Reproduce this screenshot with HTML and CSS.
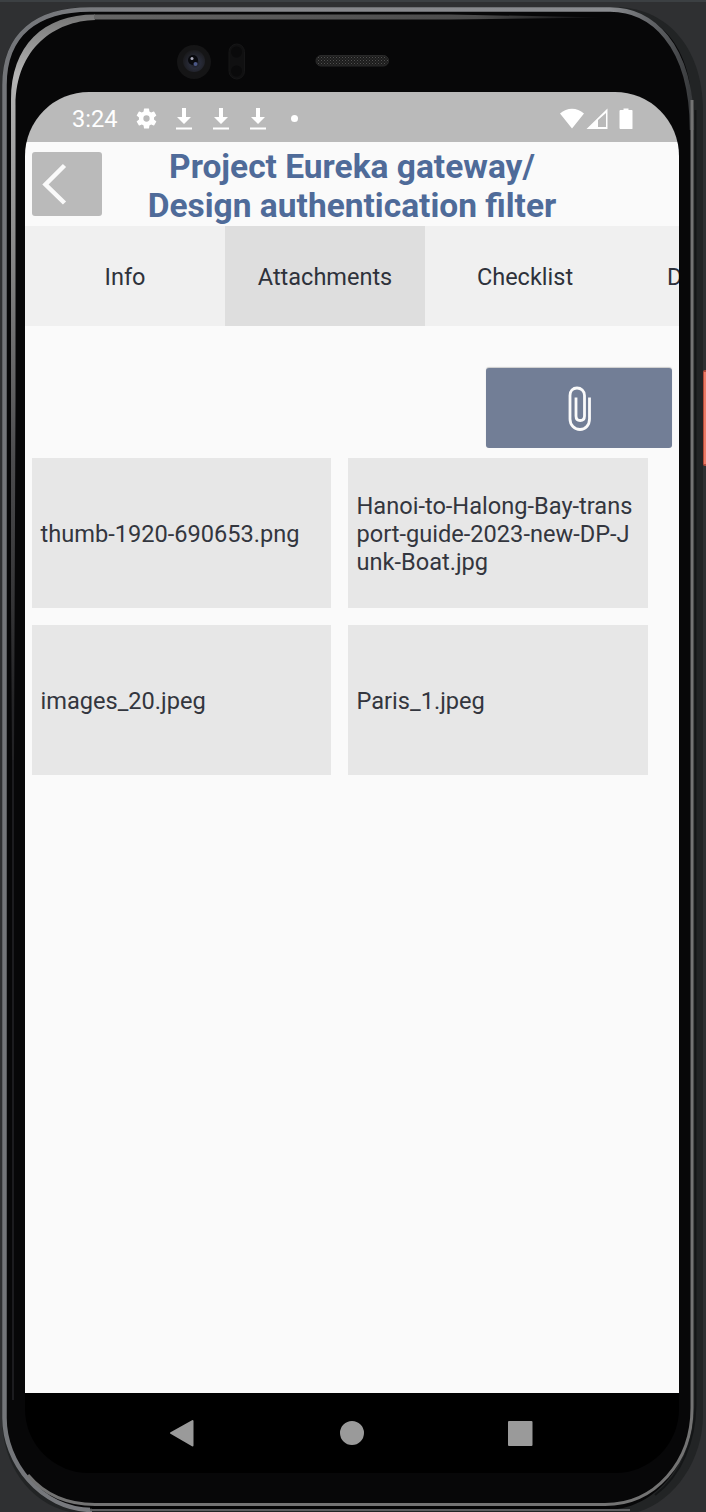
FILE: index.html
```
<!DOCTYPE html>
<html lang="en">
<head>
<meta charset="utf-8">
<title>Project Eureka gateway</title>
<link rel="stylesheet" href="styles.css">
</head>
<body>
<div class="device">
  <svg class="frame" viewBox="0 0 706 1512" aria-hidden="true">
    <defs>
      <linearGradient id="rim" gradientUnits="userSpaceOnUse" x1="0" y1="0" x2="700" y2="0">
        <stop offset="0" stop-color="#737579"/><stop offset=".4" stop-color="#85868a"/><stop offset=".87" stop-color="#898b8f"/><stop offset=".95" stop-color="#55575a"/><stop offset="1" stop-color="#2e3032"/>
      </linearGradient>
      <linearGradient id="silver" gradientUnits="userSpaceOnUse" x1="0" y1="16" x2="0" y2="760">
        <stop offset="0" stop-color="#777"/><stop offset=".08" stop-color="#b5b5b5"/><stop offset=".3" stop-color="#8c8c8c"/><stop offset=".6" stop-color="#4b4b4d"/><stop offset="1" stop-color="#1b1b1d"/>
      </linearGradient>
      <linearGradient id="topline" gradientUnits="userSpaceOnUse" x1="90" y1="0" x2="605" y2="0">
        <stop offset="0" stop-color="#666"/><stop offset=".75" stop-color="#4b4b4b"/><stop offset="1" stop-color="#08080a"/>
      </linearGradient>
      <radialGradient id="lens" cx=".55" cy=".6" r=".6">
        <stop offset="0" stop-color="#15161c"/><stop offset=".4" stop-color="#282b38"/><stop offset="1" stop-color="#1a1a1c"/>
      </radialGradient>
      <pattern id="mesh" width="3" height="3" patternUnits="userSpaceOnUse">
        <rect width="3" height="3" fill="#1c1c1c"/><rect width="1" height="1" fill="#505050"/><rect x="1.500" y="1.500" width="1" height="1" fill="#404040"/>
      </pattern>
    </defs>
    <rect width="706" height="1512" fill="#2f3032"/>
    <rect width="706" height="2" fill="#3c4043"/>
    <path d="M2 85C2 33 36 7 90 7H615C662 7 703 42 703 112V1415C703 1462 672 1506 630 1514H85C36 1512 2 1470 2 1418Z" fill="#222425"/>
    <path d="M5 1418V85C5 34 37 9 90 9H610C650 9 692 37 692 112V1410C692 1464 655 1510 605 1510H92C40 1509 5 1462 5 1418Z" fill="#070708"/>
    <path d="M692 130C692 42 650 9.500 610 9.500H90C37 9.500 4.500 34 4.500 85V1418C4.500 1462 40 1509 92 1510" fill="none" stroke="url(#rim)" stroke-width="4.500"/>
    <path d="M90 1510H630" stroke="#5d5e60" stroke-width="2"/>
    <path d="M11 600V100C11 46 43 14.500 95 14.500V20C55 21 16 48 15.500 105V400L14 760H12Z" fill="url(#silver)"/>
    <path d="M94 14.500H450L605 17.500L450 19.500H94Z" fill="url(#topline)"/>
    <path d="M13 700V1400" stroke="#242427" stroke-width="1.500"/>
    <path d="M692 100V1408C692 1462 655 1504.500 605 1504.500H95C66 1504.500 44 1494 28 1475" fill="none" stroke="#737373" stroke-width="3"/>
    <path d="M90 1507.500H610" stroke="#030303" stroke-width="2.500"/>
    <path d="M695.500 110V1405C695 1440 682 1475 655 1495" fill="none" stroke="#141617" stroke-width="2"/>
    <circle cx="194" cy="62" r="17" fill="#151516"/>
    <circle cx="194" cy="61" r="11" fill="url(#lens)"/>
    <circle cx="193" cy="60" r="5" fill="#08090d"/>
    <circle cx="192" cy="58.500" r="1.500" fill="#aab"/>
    <circle cx="195.500" cy="64" r="2" fill="#4b5888"/>
    <rect x="229" y="44" width="15.500" height="35" rx="7.750" fill="#101011" stroke="#161617"/>
    <circle cx="236.500" cy="52" r="5.500" fill="#0a0a0b"/><circle cx="236.500" cy="71" r="5.500" fill="#0a0a0b"/>
    <rect x="316" y="55.500" width="72.500" height="10.500" rx="5" fill="url(#mesh)" stroke="#292929"/>
    <rect x="703" y="370" width="5" height="96" rx="2" fill="#b34a3b"/>
    <rect x="704" y="372" width="4" height="92" fill="#ec7b66"/>
  </svg>
  <main class="screen">
    <header class="status">
      <span class="time">3:24</span>
      <svg class="gear" viewBox="2 2 20 20"><path fill="#fff" d="M19.140 12.940c.040-.3.060-.61.060-.94s-.020-.64-.070-.94l2.030-1.580a.49.49 0 0 0 .12-.61l-1.920-3.320a.49.49 0 0 0-.59-.22l-2.390.96a7 7 0 0 0-1.620-.94l-.36-2.540A.48.48 0 0 0 13.920 2.400h-3.840a.48.48 0 0 0-.48.410l-.36 2.540a7 7 0 0 0-1.620.94l-2.390-.96a.49.49 0 0 0-.59.220L2.720 8.870a.49.49 0 0 0 .12.610l2.030 1.580a6 6 0 0 0 0 1.880l-2.030 1.580a.49.49 0 0 0-.12.610l1.920 3.320c.12.220.37.290.59.220l2.390-.96c.5.380 1.030.7 1.620.94l.36 2.540c.050.240.240.410.480.410h3.840c.240 0 .440-.17.480-.41l.36-2.540a7 7 0 0 0 1.620-.94l2.390.96c.220.080.470 0 .59-.22l1.920-3.320a.49.49 0 0 0-.12-.61zM12 15a3 3 0 1 1 0-6 3 3 0 0 1 0 6"/></svg>
      <svg class="download" viewBox="0 0 16 22"><path d="M6 0h4v9h5l-7 7-7-7h5zM0 19.500h16v2H0z" fill="#fff"/></svg>
      <svg class="download" viewBox="0 0 16 22"><path d="M6 0h4v9h5l-7 7-7-7h5zM0 19.500h16v2H0z" fill="#fff"/></svg>
      <svg class="download" viewBox="0 0 16 22"><path d="M6 0h4v9h5l-7 7-7-7h5zM0 19.500h16v2H0z" fill="#fff"/></svg>
      <i class="dot"></i>
      <svg class="signals" viewBox="0 0 73 22"><path fill="#fff" d="M0 5.500C7-.8 17-.8 24 5.500L12 20.500zM59.500 3q0-1 1-1h3V.5h5V2h3.500q.5 0 .5 1v17.500q0 .5-1 .5H60.500q-1 0-1-1z"/><path fill="#fff" fill-rule="evenodd" d="M26.500 21L47.500.5V21zM38 12v7H46V5z"/></svg>
    </header>
    <section class="heading">
      <button class="back" aria-label="Back"><svg viewBox="0 0 70 64"><path d="M32.500 13.500L13.500 32.500L32.500 51" fill="none" stroke="#fafafa" stroke-width="4.500"/></svg></button>
      <h1>Project Eureka gateway/<br>Design authentication filter</h1>
    </section>
    <nav class="tabs"><span>Info</span><span class="active">Attachments</span><span>Checklist</span><span>D</span></nav>
    <section class="content">
      <button class="attach" aria-label="Attach file"><svg viewBox="0 0 24 46"><path d="M21.500 11.500V33C21.500 39 17.500 43.500 12 43.500S2 39 2 33V9.500C2 5 5 2 9 2s7.500 3 7.500 7.500V30c0 2.800-1.800 4.500-4.300 4.500S8 32.800 8 30V11.500" fill="none" stroke="#fafafa" stroke-width="2.800"/></svg></button>
      <div class="files">
        <div class="file">thumb-1920-690653.png</div>
        <div class="file">Hanoi-to-Halong-Bay-trans<br>port-guide-2023-new-DP-J<br>unk-Boat.jpg</div>
        <div class="file">images_20.jpeg</div>
        <div class="file">Paris_1.jpeg</div>
      </div>
    </section>
    <footer class="navigation"><svg viewBox="0 0 654 80"><g fill="#9a9a9a" stroke="#9a9a9a" stroke-width="2" stroke-linejoin="round"><path d="M146 40L167.500 28V52.500z"/><circle cx="327" cy="40" r="11"/><path d="M484 29h22.500v23H484z"/></g></svg></footer>
  </main>
</div>
</body>
</html>
```

FILE: styles.css
```
* { box-sizing: border-box; }
body { margin: 0; background: #2f3032; font-family: Roboto, "Liberation Sans", sans-serif; }
svg { display: block; flex: none; }
button { border: 0; padding: 0; }
.device { position: relative; width: 706px; height: 1512px; padding: 92px 27px 39px 25px; overflow: hidden; }
.frame { position: absolute; top: 0; left: 0; width: 706px; height: 1512px; }
.screen { position: relative; display: flex; flex-direction: column; width: 654px; height: 1381px; overflow: hidden; border-radius: 64px; }
.status { display: flex; align-items: center; height: 50px; padding: 3px 46px 0 47px; background: #bababa; color: #fff; }
.time { width: 64px; font-size: 23.6px; line-height: 28px; }
.gear { width: 21px; height: 21px; margin-right: 19px; }
.download { width: 16px; height: 22px; margin-right: 21px; }
.dot { width: 7px; height: 7px; margin-left: 4px; border-radius: 50%; background: #fff; }
.signals { width: 73px; height: 22px; margin-left: auto; }
.heading { display: flex; height: 84px; padding: 10px 7px 0; background: #fafafa; }
.back { width: 70px; height: 64px; border-radius: 3px; background: #bababa; }
.back svg { width: 70px; height: 64px; }
h1 { flex: 1; margin: -5px 70px 0 0; color: #4f6b99; font-size: 33.5px; line-height: 39px; font-weight: 700; text-align: center; white-space: nowrap; }
.tabs { display: flex; height: 100px; background: #f0f0f0; color: #2e323b; font-size: 23.5px; overflow: hidden; }
.tabs span { display: flex; flex: 0 0 200px; align-items: center; justify-content: center; padding-top: 1px; }
.tabs .active { background: #dedede; }
.tabs span:last-child { justify-content: flex-start; padding-left: 42px; }
.content { display: flex; flex: 1; flex-direction: column; padding: 42px 7px 0; background: #fafafa; }
.attach { display: flex; align-items: center; justify-content: center; align-self: flex-end; width: 186px; height: 80px; border-radius: 3px; background: #727e96; box-shadow: 0 -1px 1px #ccc; }
.attach svg { width: 24px; height: 46px; margin-left: 2px; margin-top: 1px; }
.files { display: grid; grid-template-columns: 299px 300px; gap: 17px; margin-top: 10px; }
.file { display: flex; align-items: center; height: 150px; padding: 1px 9px 0 8.5px; background: #e7e7e7; color: #33363e; font-size: 23.6px; line-height: 28px; white-space: nowrap; }
.navigation { height: 80px; background: #000; }
.navigation svg { width: 654px; height: 80px; }
```
